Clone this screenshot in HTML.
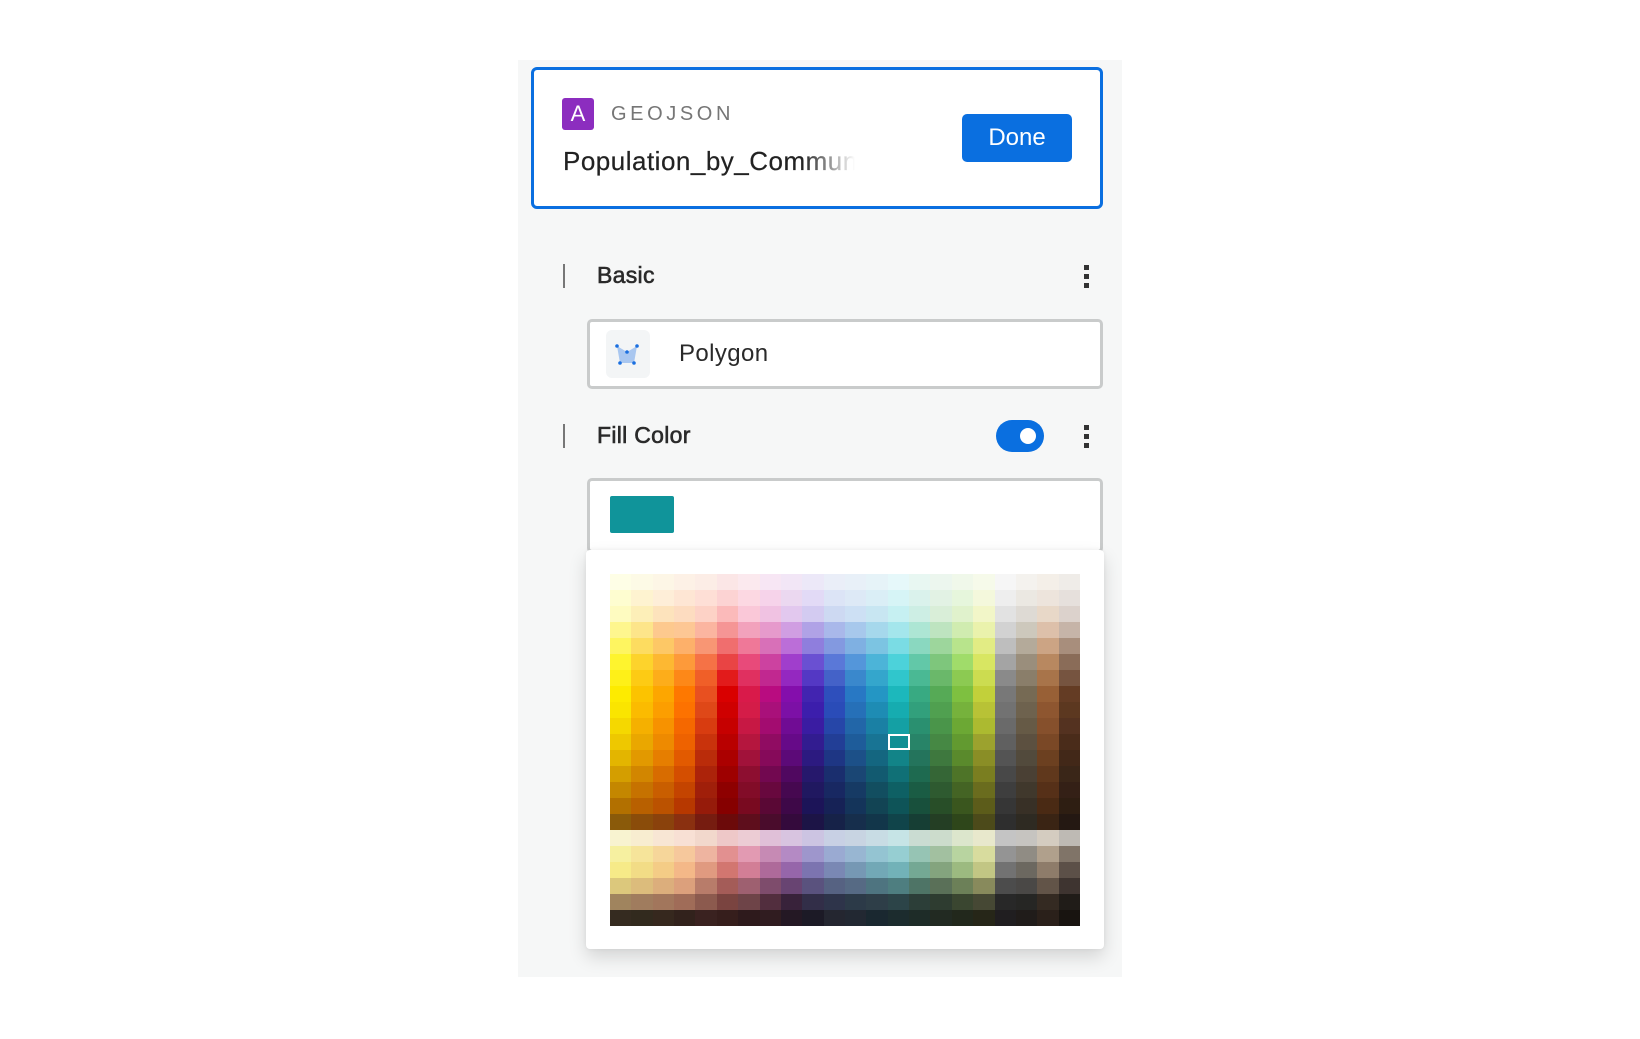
<!DOCTYPE html>
<html><head><meta charset="utf-8"><style>
*{box-sizing:border-box;margin:0;padding:0}
body{width:1640px;height:1039px;background:#fff;position:relative;overflow:hidden;font-family:"Liberation Sans",Arial,sans-serif;color:#222}
.abs{position:absolute}
#panel{left:518px;top:60px;width:604px;height:917px;background:#f6f7f7}
#card{left:531px;top:67px;width:572px;height:142px;border:3px solid #0a6fe0;border-radius:6px;background:#fff}
#badge{left:562px;top:98px;width:32px;height:32px;background:#8c2dbf;border-radius:3px;color:#fff;font-size:22px;text-align:center;line-height:32px}
#geo{left:611px;top:103px;font-size:20px;letter-spacing:3.6px;color:#767676}
#pop{left:563px;top:146px;width:292px;font-size:26px;letter-spacing:0.5px;white-space:nowrap;overflow:hidden;color:#222;-webkit-text-stroke:0.2px #222;-webkit-mask-image:linear-gradient(90deg,#000 82%,transparent 100%);mask-image:linear-gradient(90deg,#000 82%,transparent 100%)}
#done{left:962px;top:114px;width:110px;height:48px;background:#0a6fe0;border-radius:5px;color:#fff;font-size:24px;text-align:center;line-height:48px}
.bar{width:2px;height:24px;background:#777}
.lbl{font-size:23px;color:#2a2a2a;-webkit-text-stroke:0.6px #2a2a2a;letter-spacing:0.3px}
.keb{width:5px}
.keb i{display:block;width:5px;height:5px;background:#333;margin-bottom:4px}
.inp{left:587px;width:516px;border:3px solid #c9cbcb;border-radius:5px;background:#fff}
#tog{left:996px;top:420px;width:48px;height:32px;border-radius:16px;background:#0a6fe0}
#tog i{position:absolute;left:24px;top:8px;width:16px;height:16px;border-radius:50%;background:#fff}
#pop2{left:586px;top:550px;width:518px;height:399px;background:#fff;border-radius:4px;box-shadow:0 8px 18px rgba(0,0,0,.14),0 0 4px rgba(0,0,0,.06)}
#grid{left:610px;top:574px;width:470px;height:352px;display:grid;grid-template-columns:repeat(22,1fr);grid-template-rows:repeat(22,16px)}
#sel{left:888px;top:734px;width:22px;height:16px;border:2px solid #fff}
</style></head><body>
<div id="panel" class="abs"></div>
<div id="card" class="abs"></div>
<div id="badge" class="abs">A</div>
<div id="geo" class="abs">GEOJSON</div>
<div id="pop" class="abs">Population_by_Community</div>
<div id="done" class="abs">Done</div>

<div class="abs bar" style="left:563px;top:264px"></div>
<div class="abs lbl" style="left:597px;top:262px">Basic</div>
<div class="abs keb" style="left:1084px;top:265px"><i></i><i></i><i></i></div>

<div class="abs inp" style="top:319px;height:70px"></div>
<div class="abs" style="left:606px;top:330px;width:44px;height:48px;background:#f3f5f6;border-radius:6px">
<svg width="44" height="48" viewBox="0 0 44 48"><polygon points="11,16 21,22 31,16 28,33 14,33" fill="#a9c7f0"/><g fill="#1a6fe0"><circle cx="11" cy="16" r="1.8"/><circle cx="21" cy="22" r="1.8"/><circle cx="31" cy="16" r="1.8"/><circle cx="28" cy="33" r="1.8"/><circle cx="14" cy="33" r="1.8"/></g></svg></div>
<div class="abs" style="left:679px;top:340px;font-size:24px;color:#2a2a2a;letter-spacing:0.4px">Polygon</div>

<div class="abs bar" style="left:563px;top:424px"></div>
<div class="abs lbl" style="left:597px;top:422px">Fill Color</div>
<div id="tog" class="abs"><i></i></div>
<div class="abs keb" style="left:1084px;top:425px"><i></i><i></i><i></i></div>

<div class="abs inp" style="top:478px;height:75px"></div>
<div class="abs" style="left:610px;top:496px;width:64px;height:37px;background:#10949a;border-radius:2px"></div>

<div id="pop2" class="abs"></div>
<div id="grid" class="abs"></div>
<div id="sel" class="abs"></div>
<script>
var cols=[
"fefee6 fefdd0 fefbc0 fef68e fef560 fef42e fef018 fdeb00 fae500 f5d800 eec800 e3b500 d49e00 c48700 b27000 8a5a0a",
"fdfae6 fef3d0 fdefb8 fde58a fddc60 fdd32c fdcb14 fcc300 fbbb00 f5b000 eaa700 e29900 d28600 c67200 b86000 8a4c0a",
"fdf6e6 feeed8 fde3bc fdc98e fdc866 fdb832 fdad1a fda600 fc9e00 f79200 ee8a00 e67e00 d86c00 c95e00 bb5200 8a420c",
"fdf1e6 fee6d4 fddcc0 fdc794 fdb06a fd9a3a fd8818 fe7800 fd7200 f56800 ee6200 e25a00 d44e00 c44400 b73800 8a3010",
"fcede6 fedfd6 fdd2c6 fbb5a0 f89674 f57246 f05f28 e85020 df4818 d83c10 c9330c ba2c0a ac230a a01f0a 961b0a 761c10",
"fbe6e6 fcd3d3 fbbaba f59595 f06e6e e94444 e21b1b d90000 cf0000 c60000 b90000 ab0000 9e0000 8e0000 860000 6c0a0a",
"fbe9ee fcd8e2 fac8d8 f2a2bc ef7898 e84a7a e03060 d91a4a d41c48 c71844 b5163e a1123a 8d0e30 820c28 790a20 5e0e1c",
"f7e6f4 f6d3ea f0c2e2 e69acc d870b8 cc42a0 c12890 b90c80 a9107a a30c70 900c62 860a5a 720850 68083e 5a0835 4a0c2c",
"f2e6f6 ebd8f0 e2c8ee d09ee2 bb6ed8 a03ecc 9428c0 840eac 7c10a6 700c94 660a88 5c0a78 500860 460850 3e0848 340a3c",
"ece8f8 e2daf6 d3cbf1 b0a2e6 8f7edd 6a50d2 5438c4 4224b0 3c1eac 3a1ca2 321c90 2c1a80 26186c 201860 1c1458 1c1446",
"eaeef8 dce4f6 cdd9f2 a9b8ea 8399e0 5a78d8 4462c8 2e4fbc 2a4cb8 2646a8 223e96 1e3684 1a2e6e 182862 162256 162248",
"e8f0f8 dde9f6 cde0f4 a7c8ec 7fb0e2 5496da 3a88cc 2878c4 2670b8 2266a8 1e5c9a 1c5088 1a4674 163a64 14345a 162e4c",
"e6f3f8 daeef6 c8e6f2 a6d8ec 7cc4e2 4cb4d8 34a6cc 2496c4 1e8cb4 1a80a4 187494 146680 125a70 124e60 124454 12364a",
"e6f8fa d6f4f6 c6f0f2 a4e6ec 7adce4 4cd2da 30c6cc 1cb8bc 16acb0 14a0a4 108f94 128488 107076 0e6064 0e5458 10444a",
"e8f7f2 daf2ec cdeee4 ade6d4 8ad8c0 62c8a8 4ab994 38aa82 32a07c 2a9070 288468 24745c 1e6a50 1a5c44 18503c 163e34",
"ecf6ee e2f2e4 d9eed8 bee4c0 9dd69c 7ec67c 6ab86a 56aa56 50a050 4a954a 468844 3e783e 356636 2e5a30 284e28 243e24",
"f0f8ea e6f6dc e0f2cc d0ecb0 b8e48c a0dc6a 8cca52 7ec040 76b23c 6ca834 629a30 5a8a2c 4e7428 446424 3a561e 2e461a",
"f6faea f4f8dc f2f6c8 eaf2ac e2ec84 d8e662 ccdc50 c2d03a b8c236 acba30 9ca22e 8a8e26 7a7e20 6a6c1e 5c5c1a 4c4a1a",
"f6f6f6 eeeeee e2e2e2 d2d2d2 bebebe a4a4a4 8a8a8a 787878 727272 6a6a6a 606060 545454 484848 3e3e3e 363636 2e2e2e",
"f4f2ee ebe8e2 dedad4 cdc8bc b4aa9a 9a8e7c 8a7e6a 766a54 6e624e 665a46 5c5040 524a3c 4a4034 40382c 383026 2e2a22",
"f4efe8 ede4dc e8d8c8 ddc0aa cca484 b88860 a8744a 986036 8e5630 86502c 7a4826 6c4020 60381c 563018 4a2a14 3a2414",
"efece8 e6e0dc dcd2cc c6b4a8 a88e7c 8a6c58 765440 643c24 5c3820 543220 4a2c1a 422818 3a2618 342016 2e1e12 241812"
].map(function(s){return s.split(" ")});
var bottom=[
"f8f3d0 f8edd0 f8e6d4 f8e0d4 f2d8cc eec8c8 ecccd4 e0c0d8 d8c4e0 ccc4e2 c8d0e4 c8d4e2 c8dce4 c6e4e6 cadcd2 ccdccc dce6cc e8e8cc c4c4c4 c6c4c0 d4ccc0 bebab4",
"f6f0a0 f6e49a f6d69a f6c89c eeb4a0 e29090 e29ab2 c68ab4 b48ac4 9e96cc 9aaad2 98b6d2 94c4d2 96ced2 96c4b4 a2c0a0 b8d4a0 d8dc9e 949494 908c84 b0a08c 807468",
"f6ea88 f2dc86 f4cc86 f4b888 e09a80 d27670 d27e96 ae6a9a 9666aa 7c74b0 7a88b4 7698b4 72a8b6 72b2b8 74a894 84a47e 9cba80 c2c684 727272 6c6860 8e7c6a 5c5048",
"dcc87c dcbc7c dcae7c dca07c b87c6a a45c58 9e6070 7e4c6c 684472 5a527e 566282 566a84 4e7480 4e7e80 4e7466 5a7058 6c8058 888a5c 4c4c4c 4a4846 625448 3e3430",
"a0845e a07c5e a2765c a06c58 8c5a4e 7a4440 6e4448 522e3e 38223a 322e48 2e344a 2c3a48 2e3e48 2c4448 2c3e38 2e3c30 3a4630 464834 282828 262624 342a22 201c18",
"352b20 322a1e 36281e 32221c 3a2220 361e1c 2e1a1c 301c20 241824 1c1a26 242630 222832 1a2830 1c2c2e 1e2c28 222a22 22281c 262618 201e20 201c1a 2a201a 181410"
].map(function(s){return s.split(" ")});
var g=document.getElementById("grid"),h="";
for(var r=0;r<16;r++)for(var c=0;c<22;c++)h+='<div style="background:#'+cols[c][r]+'"></div>';
for(var r=0;r<6;r++)for(var c=0;c<22;c++)h+='<div style="background:#'+bottom[r][c]+'"></div>';
g.innerHTML=h;
</script>
</body></html>
